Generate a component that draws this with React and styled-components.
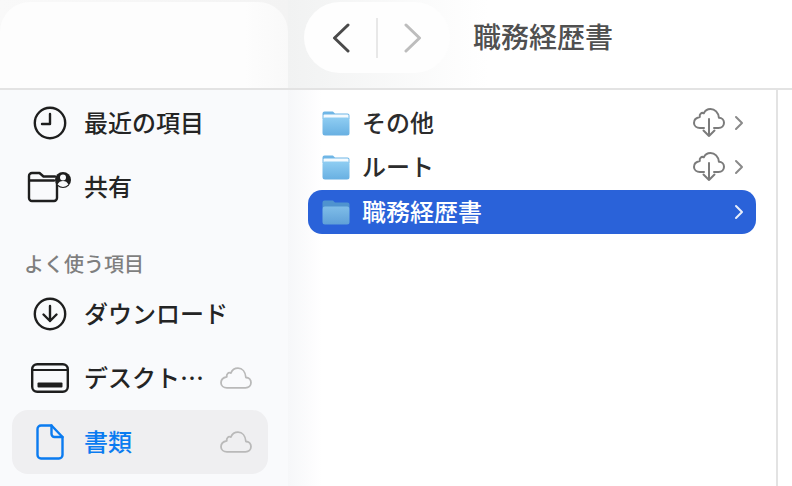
import React from "react";
import styled, { createGlobalStyle } from "styled-components";

const GlobalStyle = createGlobalStyle`
  html, body {
    margin: 0;
    padding: 0;
    width: 792px;
    height: 486px;
    overflow: hidden;
    background: #fff;
  }
  * {
    box-sizing: border-box;
  }
`;

const Window = styled.div`
  width: 792px;
  height: 486px;
  display: flex;
  overflow: hidden;
  font-family: "Noto Sans CJK JP", "Noto Sans", sans-serif;
  background: #fff;
`;

const Sidebar = styled.aside`
  width: 288px;
  flex-shrink: 0;
  display: flex;
  flex-direction: column;
  background: #f9fafc;
`;

const SidebarTop = styled.div`
  height: 90px;
  flex-shrink: 0;
  padding-top: 2px;
  background: linear-gradient(90deg, #f9f9f9, #f3f3f3);
  border-bottom: 2px solid #e3e3e3;
`;

const SidebarCap = styled.div`
  height: 86px;
  background: linear-gradient(90deg, #fdfdfd 85%, #f9f9f9);
  border-radius: 30px 30px 0 0;
`;

const NavList = styled.nav`
  display: flex;
  flex-direction: column;
  padding: 1px 20px 0 12px;
`;

const NavRow = styled.div`
  height: 64px;
  display: flex;
  align-items: center;
  padding-right: 16px;
  border-radius: 16px;
  background: ${(p) => (p.$active ? "#efeff1" : "transparent")};
  color: ${(p) => (p.$active ? "#0a7bf0" : "#242424")};
`;

const NavIcon = styled.span`
  width: 72px;
  flex-shrink: 0;
  display: flex;
  justify-content: center;
  padding-left: 3px;
`;

const NavLabel = styled.span`
  flex: 1;
  padding-bottom: 2px;
  font-size: 24px;
  line-height: 32px;
  font-weight: 500;
  white-space: nowrap;
`;

const SectionTitle = styled.div`
  padding: 30px 0 3px 12px;
  font-size: 20px;
  line-height: 30px;
  font-weight: 500;
  color: #7f7f7f;
`;

const Main = styled.main`
  flex: 1;
  display: flex;
  flex-direction: column;
  background: linear-gradient(90deg, #f6f7f9, #fff 34px);
`;

const Header = styled.header`
  height: 90px;
  flex-shrink: 0;
  display: flex;
  align-items: flex-start;
  padding: 2px 0 0 16px;
  border-bottom: 2px solid #e3e3e3;
  background: linear-gradient(90deg, #f1f2f2, #fff 200px);
`;

const NavPill = styled.div`
  width: 146px;
  height: 71px;
  display: flex;
  align-items: center;
  justify-content: space-between;
  padding: 0 28px;
  border-radius: 36px;
  background: #fefefe;
`;

const PillDivider = styled.span`
  width: 2px;
  height: 40px;
  background: #e8e8e8;
`;

const Title = styled.h1`
  margin: 14px 0 0 23px;
  font-size: 28px;
  line-height: 40px;
  font-weight: 500;
  color: #505050;
`;

const Content = styled.div`
  flex: 1;
  display: flex;
`;

const FileColumn = styled.div`
  width: 490px;
  flex-shrink: 0;
  padding: 11px 20px 0 20px;
  border-right: 2px solid #e3e3e3;
`;

const FileRow = styled.div`
  height: 44px;
  display: flex;
  align-items: center;
  padding: 0 12px 0 14px;
  border-radius: 14px;
  margin-bottom: ${(p) => (p.$gap ? "1px" : "0")};
  background: ${(p) => (p.$selected ? "#2a62d9" : "transparent")};
  color: ${(p) => (p.$selected ? "#fff" : "#2c2c2c")};
`;

const FileName = styled.span`
  flex: 1;
  margin-left: 12px;
  padding-bottom: 2px;
  font-size: 24px;
  line-height: 32px;
  font-weight: 500;
  white-space: nowrap;
`;

const Chevron = styled.svg`
  margin-left: 9px;
  flex-shrink: 0;
`;

const FolderSvg = styled.svg`
  flex-shrink: 0;
`;

const ClockIcon = () => (
  <svg width="34" height="34" viewBox="0 0 34 34" fill="none" stroke="#1e1e1e" strokeWidth="2.4" strokeLinecap="round" strokeLinejoin="round">
    <circle cx="17" cy="17" r="15.2" />
    <path d="M17 8v10H9" />
  </svg>
);

const SharedIcon = () => (
  <svg width="46" height="32" viewBox="0 0 46 32" fill="none">
    <path d="M30 11.5V27a3 3 0 0 1-3 3H5a3 3 0 0 1-3-3V5a3 3 0 0 1 3-3h7.5l4 3.5H28" stroke="#1e1e1e" strokeWidth="2.4" strokeLinecap="round" strokeLinejoin="round" />
    <path d="M2.5 9.5H27" stroke="#1e1e1e" strokeWidth="2.4" strokeLinecap="round" />
    <circle cx="36" cy="9" r="8" fill="#1e1e1e" />
    <circle cx="36" cy="6.6" r="3" fill="#f9fafc" />
    <path d="M30.6 13.6c1-2.6 3-3.6 5.4-3.6s4.4 1 5.4 3.6a7.5 7.5 0 0 1-10.8 0z" fill="#f9fafc" />
  </svg>
);

const DownloadIcon = () => (
  <svg width="34" height="34" viewBox="0 0 34 34" fill="none" stroke="#1e1e1e" strokeWidth="2.4" strokeLinecap="round" strokeLinejoin="round">
    <circle cx="17" cy="17" r="15.2" />
    <path d="M17 9v15M10.5 17.5 17 24l6.500-6.500" />
  </svg>
);

const DesktopIcon = () => (
  <svg width="38" height="30" viewBox="0 0 38 30" fill="none">
    <rect x="1.2" y="1.2" width="35.6" height="27.6" rx="5" stroke="#1e1e1e" strokeWidth="2.4" />
    <path d="M2 7h34" stroke="#1e1e1e" strokeWidth="2" />
    <rect x="6.5" y="19.5" width="25" height="5" rx="1" fill="#1e1e1e" />
  </svg>
);

const DocumentIcon = () => (
  <svg width="28" height="36" viewBox="0 0 28 36" fill="none" stroke="#0a7bf0" strokeWidth="2.4" strokeLinecap="round" strokeLinejoin="round">
    <path d="M5 1.5h10.500L26.500 13v18a3.500 3.500 0 0 1-3.500 3.500H5A3.500 3.500 0 0 1 1.500 31V5A3.500 3.500 0 0 1 5 1.500z" />
    <path d="M15.500 1.500V10a3 3 0 0 0 3 3h8" />
  </svg>
);

const CloudIcon = () => (
  <svg width="32" height="22" viewBox="0 0 32 22" fill="none" stroke="#b9b9b9" strokeWidth="1.8" strokeLinejoin="round">
    <path d="M7 20.8h18.500c3.200 0 5.500-2.200 5.500-5.200 0-2.900-2.200-5-5.100-5.100C25.400 4.800 22.300 1.200 18 1.200c-3.500 0-6 2.200-7.200 4.900C9.800 5.500 8.600 5.600 7.800 6.400 6.800 7.300 6.500 8.600 6.800 9.800 3.500 10.400 1 12.700 1 15.700c0 3 2.600 5.100 6 5.100z" />
  </svg>
);

const CloudDownloadIcon = () => (
  <svg width="32" height="30" viewBox="0 0 32 30" fill="none" stroke="#7b7b7b" strokeWidth="2" strokeLinecap="round" strokeLinejoin="round">
    <path d="M11 20H7c-3.400 0-6-2.100-6-5.100 0-3 2.500-5.300 5.800-5.900-.3-1.200 0-2.500 1-3.400.8-.8 2-.9 3-.3C12 2.600 14.500 1 17.500 1c4.300 0 7.900 3.500 8.400 8.700 2.900.1 5.100 2.200 5.100 5.100 0 3-2.300 5.200-5.500 5.200H21" />
    <path d="M16 11v17M10.500 22.500 16 28l5.500-5.500" />
  </svg>
);

const ChevronIcon = ({ color }) => (
  <Chevron width="10" height="16" viewBox="0 0 10 16" fill="none" stroke={color} strokeWidth="2" strokeLinecap="round" strokeLinejoin="round">
    <path d="M2 2l6 6-6 6" />
  </Chevron>
);

const BackIcon = () => (
  <svg width="18" height="30" viewBox="0 0 18 30" fill="none" stroke="#4a4a4a" strokeWidth="3" strokeLinecap="round" strokeLinejoin="round">
    <path d="M16 2 2.500 15 16 28" />
  </svg>
);

const ForwardIcon = () => (
  <svg width="18" height="30" viewBox="0 0 18 30" fill="none" stroke="#bdbdbd" strokeWidth="3" strokeLinecap="round" strokeLinejoin="round">
    <path d="M2 2l13.500 13L2 28" />
  </svg>
);

const FolderIcon = ({ id, selected }) => (
  <FolderSvg width="28" height="25" viewBox="0 0 28 25">
    <defs>
      <linearGradient id={id} x1="0" y1="0" x2="0" y2="1">
        <stop offset="0" stopColor={selected ? "#7fbde8" : "#8fcdf2"} />
        <stop offset="1" stopColor={selected ? "#5fa0d8" : "#68b0e2"} />
      </linearGradient>
    </defs>
    <path d="M.5 6V2.500A2 2 0 0 1 2.500.5h7.500c1 0 1.500.5 2.200 1.200L13 2.500h12.500A2 2 0 0 1 27.500 4.500V8H.5z" fill={selected ? "#4f93cf" : "#6fb6e6"} />
    {!selected && <rect x="1.5" y="3.5" width="25" height="4" rx="1" fill="#f4fafe" />}
    <rect x="0.5" y="6.5" width="27" height="18" rx="2.5" fill={`url(#${id})`} />
  </FolderSvg>
);

const files = [
  { id: "f1", name: "その他", cloud: true },
  { id: "f2", name: "ルート", cloud: true },
  { id: "f3", name: "職務経歴書", selected: true },
];

const App = () => {
  return (
    <Window>
      <GlobalStyle />
      <Sidebar>
        <SidebarTop>
          <SidebarCap />
        </SidebarTop>
        <NavList>
          <NavRow>
            <NavIcon><ClockIcon /></NavIcon>
            <NavLabel>最近の項目</NavLabel>
          </NavRow>
          <NavRow>
            <NavIcon><SharedIcon /></NavIcon>
            <NavLabel>共有</NavLabel>
          </NavRow>
          <SectionTitle>よく使う項目</SectionTitle>
          <NavRow>
            <NavIcon><DownloadIcon /></NavIcon>
            <NavLabel>ダウンロード</NavLabel>
          </NavRow>
          <NavRow>
            <NavIcon><DesktopIcon /></NavIcon>
            <NavLabel>デスクト…</NavLabel>
            <CloudIcon />
          </NavRow>
          <NavRow $active>
            <NavIcon><DocumentIcon /></NavIcon>
            <NavLabel>書類</NavLabel>
            <CloudIcon />
          </NavRow>
        </NavList>
      </Sidebar>
      <Main>
        <Header>
          <NavPill>
            <BackIcon />
            <PillDivider />
            <ForwardIcon />
          </NavPill>
          <Title>職務経歴書</Title>
        </Header>
        <Content>
          <FileColumn>
            {files.map((f, i) => (
              <FileRow key={f.id} $selected={f.selected} $gap={i === 1}>
                <FolderIcon id={f.id} selected={f.selected} />
                <FileName>{f.name}</FileName>
                {f.cloud && <CloudDownloadIcon />}
                <ChevronIcon color={f.selected ? "#e8eefb" : "#8a8a8a"} />
              </FileRow>
            ))}
          </FileColumn>
        </Content>
      </Main>
    </Window>
  );
};

export default App;
